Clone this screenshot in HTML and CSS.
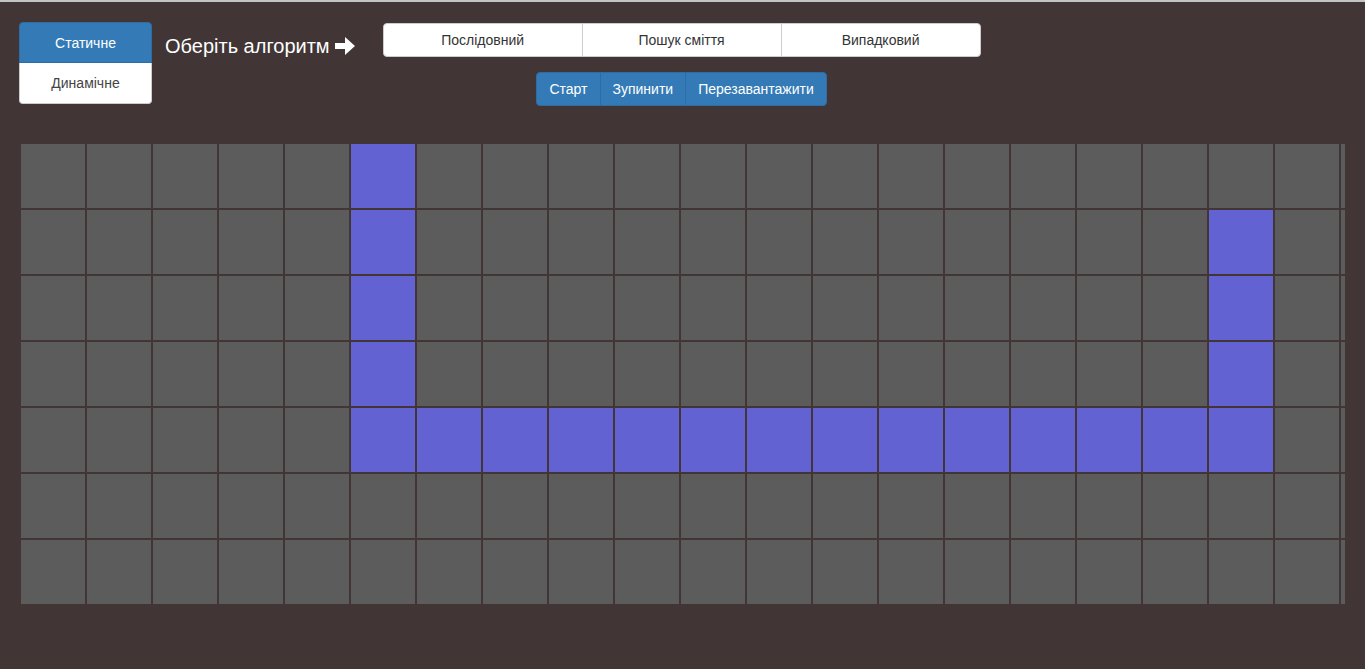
FILE: index.html
```html
<!DOCTYPE html>
<html lang="uk">
<head>
<meta charset="utf-8">
<title>Алгоритми</title>
<link rel="stylesheet" href="styles.css">
</head>
<body>
<div class="page">
  <header class="header">
    <div class="vgroup">
      <button class="btn btn-primary vtop">Статичне</button>
      <button class="btn btn-default vbottom">Динамічне</button>
    </div>
    <h1 class="title">Оберіть алгоритм
      <svg class="arrow" width="21" height="20" viewBox="0 0 21 20"><path d="M0 7 H10 V1 L20 10 L10 19 V13 H0 Z" fill="#fff"/></svg>
    </h1>
    <div class="center">
      <div class="hgroup">
        <button class="btn btn-default hbtn">Послідовний</button>
        <button class="btn btn-default hbtn">Пошук сміття</button>
        <button class="btn btn-default hbtn">Випадковий</button>
      </div>
      <div class="ctrl">
        <button class="btn btn-primary cbtn">Старт</button>
        <button class="btn btn-primary cbtn">Зупинити</button>
        <button class="btn btn-primary cbtn">Перезавантажити</button>
      </div>
    </div>
  </header>
  <div class="grid-wrap">
    <div class="grid" id="grid"></div>
  </div>
</div>
<script>
(function(){
  var g = document.getElementById('grid');
  var rows = 7, cols = 21;
  function on(r,c){
    if (c===5 && r<=4) return true;
    if (r===4 && c>=5 && c<=18) return true;
    if (c===18 && r>=1 && r<=4) return true;
    return false;
  }
  for (var r=0;r<rows;r++){
    for (var c=0;c<cols;c++){
      var d=document.createElement('div');
      d.className='cell'+(on(r,c)?' wall':'');
      g.appendChild(d);
    }
  }
})();
</script>
</body>
</html>
```

FILE: styles.css
```css
html, body {
  margin: 0;
  padding: 0;
}
body {
  background: #413536;
  border-top: 2px solid #c4c4c4;
  font-family: "Liberation Sans", Arial, sans-serif;
  font-size: 14px;
  color: #333;
  height: 667px;
  overflow: hidden;
}
.page {
  padding: 20px 0 0 19px;
}
.header {
  display: flex;
  align-items: flex-start;
}
.btn {
  font-family: "Liberation Sans", Arial, sans-serif;
  font-size: 14px;
  line-height: 20px;
  padding: 6px 12px;
  border: 1px solid transparent;
  margin: 0;
  cursor: pointer;
  box-sizing: border-box;
}
.btn-primary {
  background: #337ab7;
  border-color: #2e6da4;
  color: #fff;
}
.btn-default {
  background: #fff;
  border-color: #ccc;
  color: #333;
}
.vgroup {
  display: flex;
  flex-direction: column;
  width: 133px;
}
.vgroup .btn {
  height: 41px;
  width: 100%;
}
.vtop {
  border-radius: 4px 4px 0 0;
}
.vbottom {
  border-radius: 0 0 4px 4px;
  border-top: none;
  color: #444;
}
.title {
  margin: 12px 0 0 13px;
  font-size: 20px;
  font-weight: normal;
  color: #fff;
  display: flex;
  align-items: center;
  line-height: 24px;
  white-space: nowrap;
}
.arrow {
  margin-left: 5px;
}
.center {
  margin: 1px 0 0 27px;
  display: flex;
  flex-direction: column;
  align-items: center;
  width: 598px;
}
.hgroup {
  display: flex;
  width: 598px;
}
.hbtn {
  flex: 1;
  height: 34px;
  border-radius: 0;
  margin-left: -1px;
}
.hbtn:first-child {
  margin-left: 0;
  border-radius: 4px 0 0 4px;
}
.hbtn:last-child {
  border-radius: 0 4px 4px 0;
}
.ctrl {
  display: flex;
  margin-top: 15px;
}
.cbtn {
  height: 34px;
  border-radius: 0;
  margin-left: -1px;
}
.cbtn:first-child {
  margin-left: 0;
  border-radius: 4px 0 0 4px;
}
.cbtn:last-child {
  border-radius: 0 4px 4px 0;
}
.grid-wrap {
  margin: 38px 0 0 2px;
  width: 1324px;
  overflow: hidden;
}
.grid {
  display: grid;
  grid-template-columns: repeat(21, 64px);
  grid-auto-rows: 64px;
  gap: 2px;
  width: max-content;
}
.cell {
  background: #5c5c5c;
}
.cell.wall {
  background: #6262d2;
}
```
